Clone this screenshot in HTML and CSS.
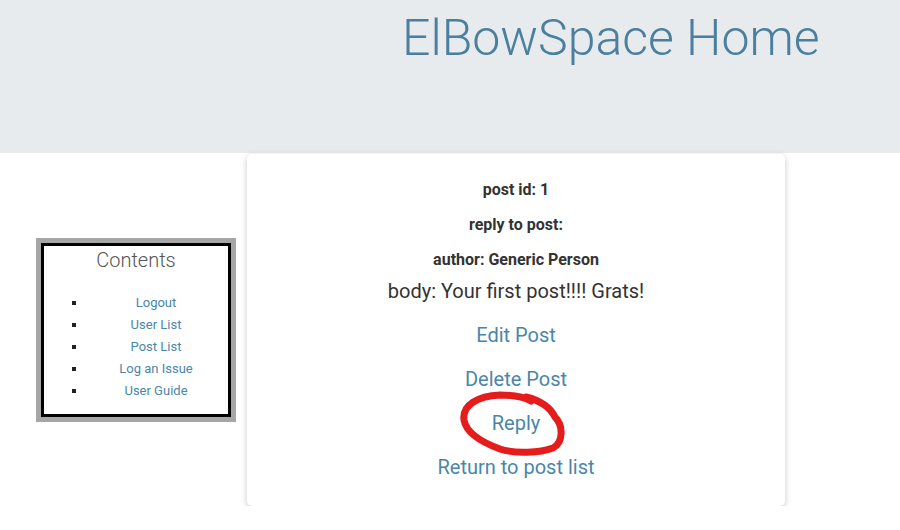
FILE: index.html
```html
<!DOCTYPE html>
<html>
<head>
<meta charset="utf-8">
<link rel="stylesheet" href="styles.css">
</head>
<body>
<header class="masthead">
  <h1 class="site-title">ElBowSpace Home</h1>
</header>
<main class="layout">
  <nav class="sidebar">
    <div class="sidebar-inner">
      <h2 class="sidebar-title">Contents</h2>
      <ul class="nav-list">
        <li><a href="#">Logout</a></li>
        <li><a href="#">User List</a></li>
        <li><a href="#">Post List</a></li>
        <li><a href="#">Log an Issue</a></li>
        <li><a href="#">User Guide</a></li>
      </ul>
    </div>
  </nav>
  <section class="card">
    <p class="meta">post id: 1</p>
    <p class="meta">reply to post:</p>
    <p class="meta">author: Generic Person</p>
    <p class="body-text">body: Your first post!!!! Grats!</p>
    <a class="action" href="#">Edit Post</a>
    <a class="action" href="#">Delete Post</a>
    <a class="action" href="#">Reply</a>
    <a class="action" href="#">Return to post list</a>
    <svg class="scribble" viewBox="457 388 112 72" width="112" height="72" aria-hidden="true">
      <path d="M 526 397 C 542 401, 551 409, 555 417 C 563 425, 564 442, 553 448 C 540 453, 515 454, 500 449 C 481 442, 466 432, 464 420 C 462 405, 478 396, 500 395 C 514 395, 524 397, 531 401" fill="none" stroke="#e41c1c" stroke-width="7" stroke-linecap="round" stroke-linejoin="round"/>
    </svg>
  </section>
</main>
</body>
</html>
```

FILE: styles.css
```css
* {
  box-sizing: border-box;
}

body {
  margin: 0;
  background: #ffffff;
  font-family: Roboto, "Liberation Sans", sans-serif;
  color: #333333;
}

.masthead {
  height: 153px;
  background: #e8ebee;
  padding-left: 402px;
  padding-top: 8px;
}

.site-title {
  margin: 0;
  font-size: 50px;
  line-height: 60px;
  font-weight: 300;
  color: #4a7f9e;
}

.layout {
  display: flex;
  align-items: flex-start;
}

.sidebar {
  margin-left: 36px;
  margin-top: 85px;
  width: 200px;
  height: 184px;
  border: 5px solid #a6a6a6;
}

.sidebar-inner {
  height: 100%;
  border: 3px solid #000000;
  background: #ffffff;
}

.sidebar-title {
  margin: 0;
  text-align: center;
  font-size: 20px;
  line-height: 28px;
  font-weight: 300;
  color: #555555;
}

.nav-list {
  margin: 18px 0 0 0;
  padding-left: 43px;
  padding-right: 3px;
  list-style: square;
  color: #222222;
}

.nav-list li {
  text-align: center;
  font-size: 13px;
  line-height: 22px;
}

.nav-list a {
  color: #4a86a8;
  text-decoration: none;
}

.card {
  position: relative;
  margin-left: 11px;
  margin-top: 1px;
  width: 538px;
  background: #ffffff;
  border-radius: 5px;
  box-shadow: 0 2px 6px rgba(0, 0, 0, 0.22);
  padding: 18px 0 17px 0;
  display: flex;
  flex-direction: column;
  align-items: center;
  text-align: center;
}

.meta {
  margin: 0;
  font-size: 16px;
  line-height: 35px;
  font-weight: 700;
  color: #333333;
}

.body-text {
  margin: 0 0 7px 0;
  font-size: 20px;
  line-height: 29px;
  color: #333333;
}

.action {
  font-size: 20px;
  line-height: 44px;
  color: #4a86a8;
  text-decoration: none;
}

.scribble {
  position: absolute;
  left: 210px;
  top: 234px;
  overflow: visible;
}
```
